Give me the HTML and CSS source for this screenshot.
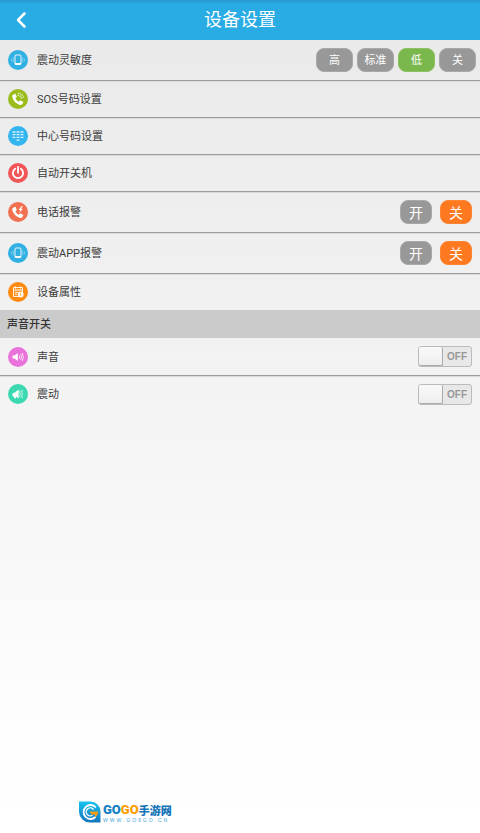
FILE: index.html
```html
<!DOCTYPE html>
<html lang="zh-CN">
<head>
<meta charset="utf-8">
<meta name="viewport" content="width=device-width, initial-scale=1">
<title>设备设置</title>
<link rel="stylesheet" href="styles.css">
</head>
<body>
<svg class="defs" aria-hidden="true">
  <symbol id="phone-vibrate" viewBox="0 0 20 20">
    <rect x="7" y="5" width="6" height="9.6" rx="1" fill="none" stroke="#fff" stroke-width=".9"/>
    <path d="M7 13h6v1.6H7z" fill="#fff"/>
    <path d="M5.2 7.4v4.8M14.8 7.4v4.8M3.6 8.6v2.6M16.4 8.6v2.6" fill="none" stroke="#fff" stroke-width=".6" opacity=".6"/>
  </symbol>
  <symbol id="handset" viewBox="0 0 20 20">
    <path d="M4.6 6.2 6.4 5c.5-.3 1-.1 1.2.3l1 2c.2.5.1.9-.3 1.2l-.9.8c.7 1.6 1.700 2.700 3.300 3.400l.9-.9c.4-.3.8-.4 1.200-.2l2.100 1.200c.5.3.5.8.2 1.200l-1.200 1.500c-.4.4-1 .6-1.600.400C8.200 14.900 5.200 11.700 4.200 7.500c-.1-.5 0-1 .4-1.300z" fill="#fff"/>
  </symbol>
</svg>

<header class="topbar">
  <a class="back" href="#" aria-label="返回">
    <svg width="12" height="18" viewBox="0 0 12 18"><path d="M9.500 2.500 3 9l6.500 6.500" fill="none" stroke="#fff" stroke-width="2.500" stroke-linecap="round" stroke-linejoin="round"/></svg>
  </a>
  <h1 class="title">设备设置</h1>
</header>

<main>
  <div class="list">
    <div class="row tall">
      <svg class="icon sky"><use href="#phone-vibrate"/></svg>
      <span class="label">震动灵敏度</span>
      <div class="levels">
        <button class="pill" type="button">高</button>
        <button class="pill" type="button">标准</button>
        <button class="pill green" type="button">低</button>
        <button class="pill" type="button">关</button>
      </div>
    </div>
    <a class="row" href="#">
      <svg class="icon lime" viewBox="0 0 20 20"><use href="#handset"/><path d="M9.500 6.200c2.200.200 3.700 1.600 4.200 3.800M10 4.300c3 .200 5 2.100 5.600 5" fill="none" stroke="#fff" stroke-width="1.300" stroke-dasharray="1.500 .5" opacity=".65"/></svg>
      <span class="label">SOS号码设置</span>
    </a>
    <a class="row" href="#">
      <svg class="icon azure" viewBox="0 0 20 20"><path d="M4.500 6h3M8.500 6h3M12.500 6h3M4.500 8.700h3M8.500 8.700h3M12.500 8.700h3M4.500 11.400h3M8.500 11.400h3M12.500 11.400h3M8.500 14.100h3" fill="none" stroke="#fff" stroke-width="1.300" opacity=".8"/></svg>
      <span class="label">中心号码设置</span>
    </a>
    <a class="row" href="#">
      <svg class="icon red" viewBox="0 0 20 20"><path d="M7.200 5.800a5.100 5.100 0 1 0 5.600 0M10 3.800v6" fill="none" stroke="#fff" stroke-width="1.800" stroke-linecap="round"/></svg>
      <span class="label">自动开关机</span>
    </a>
    <div class="row tall">
      <svg class="icon coral" viewBox="0 0 20 20"><use href="#handset"/><path d="m13.600 4-3 4h1.700l-1 3 3.500-4.200h-1.900L15 4z" fill="#fff"/></svg>
      <span class="label">电话报警</span>
      <div class="choice">
        <button class="pill large" type="button">开</button>
        <button class="pill large orange" type="button">关</button>
      </div>
    </div>
    <div class="row tall">
      <svg class="icon sky"><use href="#phone-vibrate"/></svg>
      <span class="label">震动APP报警</span>
      <div class="choice">
        <button class="pill large" type="button">开</button>
        <button class="pill large orange" type="button">关</button>
      </div>
    </div>
    <a class="row" href="#">
      <svg class="icon amber" viewBox="0 0 20 20"><path d="M5.500 5.500h9v9h-9z" fill="none" stroke="#fff" stroke-width=".9"/><path d="M5.500 8h9M7.500 4.500v2M12.500 4.500v2M7 10.300h3M7 12.300h2" stroke="#fff" stroke-width="1" fill="none"/><circle cx="12.700" cy="12.500" r="2.900" fill="#fff"/><path d="M12.700 10.800v2M12.700 13.300v.8" stroke="#ff8a10" stroke-width=".9"/></svg>
      <span class="label">设备属性</span>
    </a>
  </div>

  <h2 class="section">声音开关</h2>

  <div class="list">
    <label class="row">
      <svg class="icon pink" viewBox="0 0 20 20"><path d="M4.500 8.500h2L9.800 6v8l-3.300-2.500h-2z" fill="#fff"/><path d="M11.200 8.300q1 1.700 0 3.400M12.700 7.200q1.700 2.800 0 5.600M14.200 6q2.400 4 0 8" fill="none" stroke="#fff" stroke-width=".9" opacity=".85"/></svg>
      <span class="label">声音</span>
      <span class="switch"><input type="checkbox"><span class="state">OFF</span></span>
    </label>
    <label class="row">
      <svg class="icon mint" viewBox="0 0 20 20"><path d="M4.500 9.200 7 8.400 10.600 5.500v9L8 12.800v1.400H6v-1.700l-1.500-.3z" fill="#fff"/><path d="m12.300 6.500-.6 1.700.6 1.800-.6 1.800.6 1.700M14.400 5.800l-.6 2.100.6 2.100-.6 2.100.6 2.100" fill="none" stroke="#fff" stroke-width=".9" opacity=".8"/></svg>
      <span class="label">震动</span>
      <span class="switch"><input type="checkbox"><span class="state">OFF</span></span>
    </label>
  </div>
</main>

<footer class="brand">
  <svg width="22" height="22" viewBox="0 0 22 22" aria-hidden="true">
    <defs><linearGradient id="drop" x1="0" y1="0" x2="0" y2="1"><stop offset="0" stop-color="#19c3ee"/><stop offset="1" stop-color="#1474bd"/></linearGradient></defs>
    <path d="M0 .5h11.500A10 10 0 0 1 21.500 10.500V21.500H11A11 11 0 0 1 0 11z" fill="url(#drop)"/>
    <path d="M16.800 6.300A7 7 0 1 0 16.500 16" fill="none" stroke="#fff" stroke-width="1.800"/>
    <path d="M14.500 8.500A4 4 0 1 0 13.500 14.200" fill="none" stroke="#fff" stroke-width="1.300"/>
    <path d="M10.500 10.500h8.700c0 2.500-1.200 4.500-3.200 5.700v-2.800h-3.500z" fill="#ff9c12"/>
  </svg>
  <div class="wordmark">
    <div class="name"><span class="go">GO</span><span class="go warm">GO</span><span class="cn">手游网</span></div>
    <div class="site">WWW.GO9GO.CN</div>
  </div>
</footer>
</body>
</html>
```

FILE: styles.css
```css
* {
  box-sizing: border-box;
}

body {
  display: flex;
  flex-direction: column;
  min-height: 100vh;
  margin: 0;
  background: linear-gradient(#e9e9e9, #f4f4f4 50%, #fefefe 88%, #fff);
  color: #3c3c3c;
  font: 11px/16px Roboto, "Noto Sans CJK SC", sans-serif;
}

.defs {
  position: absolute;
  width: 0;
  height: 0;
}

.topbar {
  display: grid;
  grid-template-columns: 40px 1fr 40px;
  align-items: center;
  height: 40px;
  background: linear-gradient(#2797cc, #29abe4 4px);
}

.back {
  display: flex;
  padding-left: 15px;
}

.title {
  margin: 0;
  color: #fff;
  font-size: 18px;
  font-weight: 400;
  line-height: 24px;
  text-align: center;
}

.row {
  display: flex;
  align-items: center;
  min-height: 37px;
  padding: 0 8px;
  color: inherit;
  text-decoration: none;
}

.row.tall {
  min-height: 41px;
}

.row.tall:first-child {
  min-height: 40px;
}

.row + .row {
  border-top: 1px solid #9d9d9d;
  box-shadow: inset 0 1px #dadada;
}

.icon {
  flex: none;
  width: 20px;
  height: 20px;
  border-radius: 50%;
}

.sky { background: #31b0e3; }
.lime { background: #9abd1c; }
.azure { background: #33b5f0; }
.red { background: #f15558; }
.coral { background: #f0704f; }
.amber { background: #ff8a10; }
.pink { background: #ea72db; }
.mint { background: #3bd9b2; }

.label {
  flex: 1;
  margin-left: 9px;
  padding-top: 2px;
}

.levels,
.choice {
  display: flex;
  gap: 3px;
  margin-right: -4px;
}

.choice {
  gap: 8px;
  margin-right: 0;
}

.pill {
  width: 38px;
  height: 24px;
  padding: 1px 0 0;
  border: 1px solid #a8a8a8;
  border-radius: 8px;
  background: #989898;
  color: #fff;
  font: inherit;
}

.levels .pill {
  width: 37px;
}

.levels {
  gap: 4px;
}

.pill.large {
  width: 32px;
  font-size: 14px;
}

.pill.green {
  border-color: #8cc15f;
  background: #7ab74c;
}

.pill.orange {
  border-color: #ff8533;
  background: #ff7920;
}

.section {
  margin: 0;
  padding: 7px 7px 5px;
  background: #cbcbcb;
  color: #333;
  font-size: 11px;
  font-weight: 500;
  line-height: 16px;
}

.switch {
  display: flex;
  width: 54px;
  height: 21px;
  border: 1px solid #bbb;
  border-radius: 3px;
  background: #e8e8e8;
}

.switch input {
  appearance: none;
  width: 24px;
  height: 19px;
  margin: 0;
  border-right: 1px solid #aaa;
  border-bottom: 1px solid #aaa;
  border-radius: 2px;
  background: linear-gradient(#f9f9f9, #eee);
}

.state {
  flex: 1;
  color: #999;
  font: 700 10px/20px "Liberation Sans", sans-serif;
  text-align: center;
}

.brand {
  display: flex;
  gap: 2px;
  margin-top: auto;
  padding: 0 0 10px 79px;
}

.name {
  display: flex;
  align-items: center;
  height: 17px;
  font-weight: 700;
}

.go {
  color: #137fc4;
  font: 900 13px/16px Roboto, sans-serif;
}

.go.warm {
  color: #ffa000;
}

.cn {
  color: #1474b8;
  font-family: "Noto Sans CJK SC", sans-serif;
  font-weight: 900;
}

.site {
  color: #45a6d8;
  font: 5px/5px "Liberation Sans", sans-serif;
  letter-spacing: 2px;
}
```
